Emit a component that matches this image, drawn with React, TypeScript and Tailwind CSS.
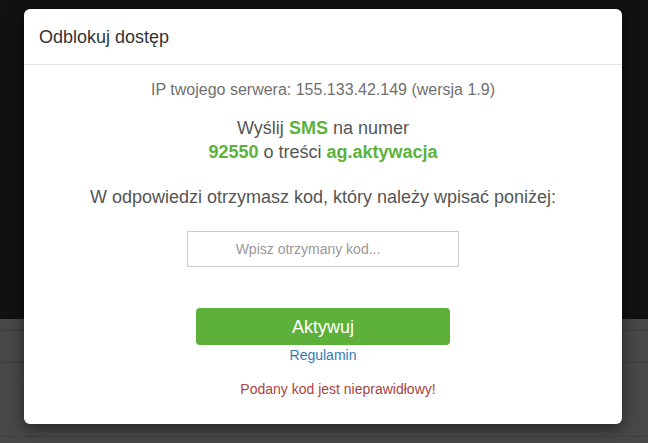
import React from "react";

export default function App() {
  return (
    <div className="relative w-[648px] h-[443px] overflow-hidden" style={{ fontFamily: '"Liberation Sans", Arial, sans-serif' }}>
      <div className="flex flex-col h-full">
        <div className="h-[319px] bg-[#111111]" />
        <div className="flex-1 bg-[#484848] flex flex-col">
          <div className="h-[12px] border-b border-[#3e3e3e]" />
          <div className="h-[32px] border-b border-[#3e3e3e]" />
          <div className="h-[16px] border-b border-[#444444]" />
          <div className="h-[20px] border-b border-[#444444]" />
          <div className="h-[38px] border-b border-[#404040]" />
        </div>
      </div>

      <div className="absolute left-[24px] top-[9px] w-[598px] h-[415px] bg-white rounded-[6px] shadow-[0_5px_15px_rgba(0,0,0,0.5)] flex flex-col">
        <div className="h-[56px] border-b border-[#e5e5e5] px-[15px] flex items-center">
          <h4 className="text-[18px] leading-[26px] text-[#333333] m-0">Odblokuj dostęp</h4>
        </div>
        <div className="flex flex-col items-center pt-[15px] text-center">
          <p className="text-[16px] leading-[20px] text-[#707070]">IP twojego serwera: 155.133.42.149 (wersja 1.9)</p>
          <div className="mt-[16px] text-[18px] leading-[24px] text-[#555555]">
            <div>
              Wyślij <b className="text-[#5cb23b]">SMS</b> na numer
            </div>
            <div>
              <b className="text-[#5cb23b]">92550</b> o treści <b className="text-[#5cb23b]">ag.aktywacja</b>
            </div>
          </div>
          <p className="mt-[21px] text-[18px] leading-[24px] text-[#555555]">
            W odpowiedzi otrzymasz kod, który należy wpisać poniżej:
          </p>
          <input
            className="mt-[22px] w-[272px] h-[36px] border border-[#cccccc] text-center pr-[30px] text-[14px] text-[#555555] placeholder:text-[#999999] outline-none"
            placeholder="Wpisz otrzymany kod..."
          />
          <button className="mt-[41px] w-[254px] h-[37px] bg-[#5db13b] rounded-[4px] text-white text-[18px] leading-[24px]">
            Aktywuj
          </button>
          <a className="text-[14px] leading-[20px] text-[#337ab7]" href="#">
            Regulamin
          </a>
          <p className="mt-[14px] text-[14px] leading-[20px] text-[#a94442] pl-[30px]">Podany kod jest nieprawidłowy!</p>
        </div>
      </div>
    </div>
  );
}
